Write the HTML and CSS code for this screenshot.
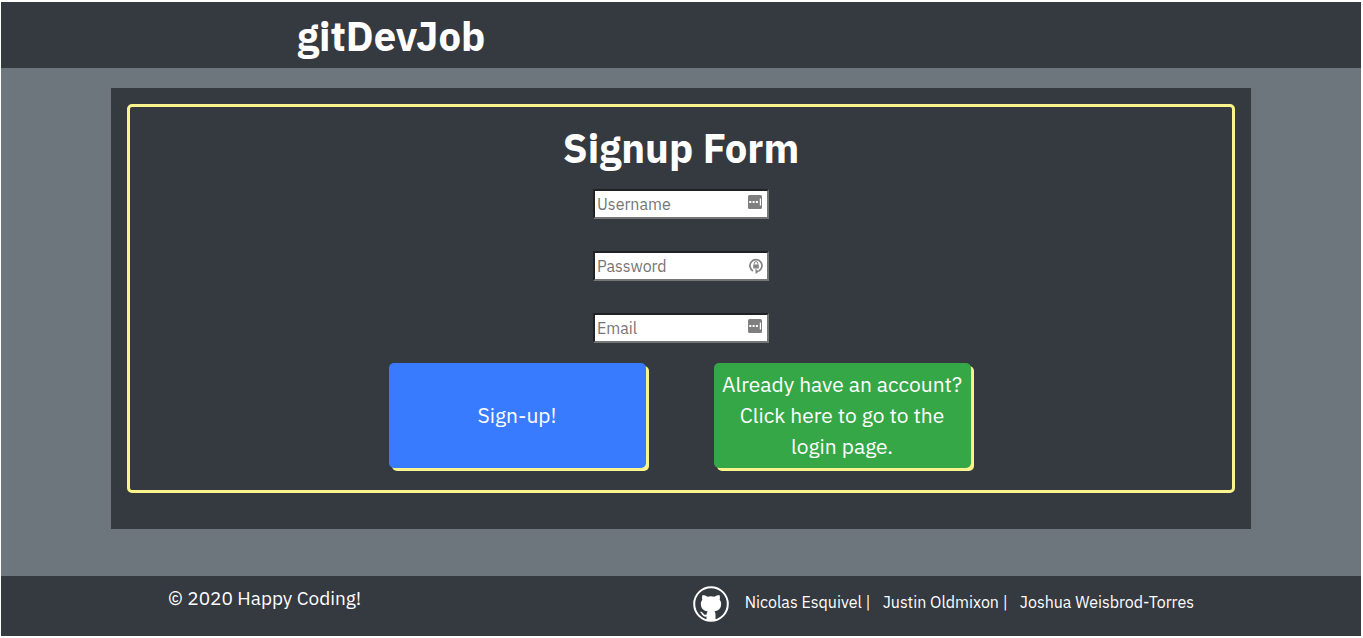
FILE: index.html
```html
<!DOCTYPE html>
<html lang="en">
<head>
  <meta charset="utf-8">
  <meta name="viewport" content="width=device-width, initial-scale=1">
  <title>gitDevJob</title>
  <link rel="stylesheet" href="styles.css">
</head>
<body>
  <header class="site-header">
    <h1 class="brand">gitDevJob</h1>
  </header>

  <main class="page">
    <section class="card">
      <form class="signup">
        <h2 class="signup-title">Signup Form</h2>
        <div class="fields">
          <div class="field">
            <input class="field-input" type="text" placeholder="Username" aria-label="Username">
            <svg class="field-icon" viewBox="0 0 14 14" aria-hidden="true">
              <rect width="14" height="14" rx="1.5" fill="#7f7f7f"/>
              <path d="M1.3 6h2v2h-2zM4.6 6h2v2h-2zM7.900 6h2v2h-2zM11.800 3.500h1.200v7h-1.200z" fill="#fff"/>
            </svg>
          </div>
          <div class="field">
            <input class="field-input" type="password" placeholder="Password" aria-label="Password">
            <svg class="field-icon field-icon-lock" viewBox="0 0 14 16" aria-hidden="true">
              <path d="M4 12.900A6 6 0 1 1 9.500 13.100" fill="none" stroke="#858585" stroke-width="1.800"/>
              <path d="M6.500 10.800v5.200l3.500-2.600z" fill="#858585"/>
              <path d="M4.200 6.500h5.600v4H4.200z" fill="#858585"/>
              <path d="M5.300 6.600V5.300a1.700 1.700 0 0 1 3.400 0v1.300" fill="none" stroke="#858585"/>
            </svg>
          </div>
          <div class="field">
            <input class="field-input" type="email" placeholder="Email" aria-label="Email">
            <svg class="field-icon" viewBox="0 0 14 14" aria-hidden="true">
              <rect width="14" height="14" rx="1.5" fill="#7f7f7f"/>
              <path d="M1.3 6h2v2h-2zM4.6 6h2v2h-2zM7.900 6h2v2h-2zM11.800 3.500h1.200v7h-1.200z" fill="#fff"/>
            </svg>
          </div>
        </div>
        <div class="actions">
          <button class="btn btn-primary" type="submit">Sign-up!</button>
          <button class="btn btn-success" type="button">Already have an account? Click here to go to the login page.</button>
        </div>
      </form>
    </section>
  </main>

  <footer class="site-footer">
    <p class="copyright">© 2020 Happy Coding!</p>
    <div class="credits">
      <svg class="github" viewBox="0 0 36 36" aria-hidden="true">
        <circle cx="18" cy="18" r="16.8" fill="none" stroke="#fff" stroke-width="2"/>
        <path d="M9.6 9c1.8 0 3.3.8 4.8 1.7a18 18 0 0 1 7.2 0C23.100 9.800 24.600 9 26.400 9c.7 1.700.7 3.200.3 4.800 1.200 1.500 1.600 3 1.400 5-.4 4.200-2.800 6-6.700 6.600 1 1 1.100 2 1.100 3.500V34c-3 1.300-6 1.300-9 0v-3.400c-2.600.3-3.900-.7-4.800-2.500-.5-1-1.100-1.600-2-2.300 1.600-.3 2.700.4 3.600 1.700.8 1.200 1.700 1.500 3.300 1.100.1-1.400.4-2.400 1-3.200-4-.6-6.300-2.500-6.700-6.600-.2-2 .2-3.500 1.400-5-.4-1.600-.4-3.100.3-4.800z" fill="#fff"/>
      </svg>
      <ul class="names">
        <li><a class="name" href="#">Nicolas Esquivel</a> |</li>
        <li><a class="name" href="#">Justin Oldmixon</a> |</li>
        <li><a class="name" href="#">Joshua Weisbrod-Torres</a></li>
      </ul>
    </div>
  </footer>
</body>
</html>
```
FILE: styles.css
```css
* {
  box-sizing: border-box;
}

body {
  display: flex;
  flex-direction: column;
  min-height: 100vh;
  margin: 0;
  padding: 2px 2px 2px 1px;
  background: #fff;
  color: #fff;
  font-family: "IBM Plex Sans", Roboto, sans-serif;
  font-size: 16px;
  line-height: 24px;
}

.site-header {
  padding: 10px 296px 8px;
  background: #353940;
}

.brand,
.signup-title {
  margin: 0;
  font-size: 40px;
  font-weight: 700;
  line-height: 48px;
}

.page {
  flex: 1;
  padding: 20px 16px 47px;
  background: #6d757d;
}

.card {
  max-width: 1140px;
  margin: 0 auto;
  padding: 16px 16px 36px;
  background: #353940;
}

.signup {
  padding: 17px 16px 22px;
  border: 3px solid #fbf38c;
  border-radius: 5px;
  text-align: center;
}

.fields {
  display: flex;
  flex-direction: column;
  align-items: center;
  gap: 32px;
  padding: 17px 0 20px;
}

.field {
  position: relative;
  width: 176px;
}

.field-input {
  display: block;
  width: 100%;
  height: 30px;
  padding: 1px 2px;
  border: 2px solid;
  border-color: #202124 #767676 #767676 #202124;
  border-radius: 0;
  background: #fff;
  color: #212529;
  font: inherit;
}

.field-input::placeholder {
  color: #757575;
  opacity: 1;
}

.field-icon {
  position: absolute;
  top: 6px;
  right: 7px;
  width: 14px;
  height: 14px;
}

.field-icon-lock {
  top: 7px;
  right: 6px;
  height: 16px;
}

.actions {
  display: flex;
  flex-wrap: wrap;
  justify-content: center;
  gap: 24px 68px;
  padding-right: 3px;
}

.btn {
  width: 257px;
  min-height: 105px;
  padding: 6px 8px;
  border: 0;
  border-radius: 5px;
  box-shadow: 3px 3px #fbf38c;
  color: #fff;
  font: inherit;
  font-size: 21px;
  line-height: 31px;
  cursor: pointer;
}

.btn-primary {
  background: #387bff;
}

.btn-success {
  background: #36a746;
}

.site-footer {
  display: flex;
  flex-wrap: wrap;
  justify-content: space-between;
  min-height: 60px;
  padding: 10px 167px 14px;
  background: #353940;
}

.copyright {
  margin: 0;
  font-size: 19px;
}

.credits {
  display: flex;
  gap: 16px;
}

.github {
  width: 36px;
  height: 36px;
}

.names {
  display: flex;
  gap: 12px;
  margin: 0;
  padding: 4px 0 0;
  list-style: none;
}

.name {
  color: #fff;
  text-decoration: none;
}
```
